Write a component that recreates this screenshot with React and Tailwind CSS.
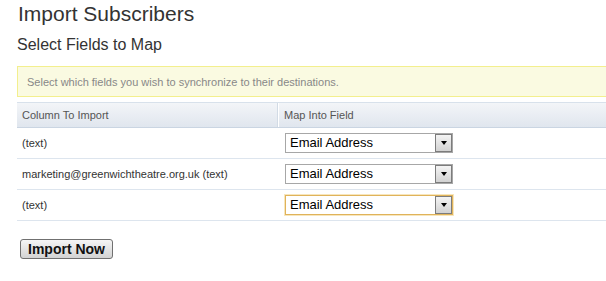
import { useState } from 'react';

const rows = [
    { column: '(text)', focused: false },
    { column: 'marketing@greenwichtheatre.org.uk (text)', focused: false },
    { column: '(text)', focused: true },
];

function FieldSelect({ focused }) {
    const [value, setValue] = useState('email');
    return (
        <div
            className={
                'relative w-[168px] h-[20px] bg-white border ' +
                (focused
                    ? 'border-[#e0b35a] shadow-[0_0_0_1px_#f7e6bd]'
                    : 'border-[#a7a7a7]')
            }
        >
            <select
                value={value}
                onChange={(e) => setValue(e.target.value)}
                className="appearance-none w-full h-full bg-transparent pl-[4px] pr-[20px] text-[13px] leading-[18px] text-black outline-none"
            >
                <option value="email">Email Address</option>
                <option value="first">First Name</option>
                <option value="last">Last Name</option>
            </select>
            {/* arrow button */}
            <span className="pointer-events-none absolute right-0 top-0 w-[17px] h-[18px] border border-[#7c7c7c] bg-gradient-to-b from-[#f4f4f4] to-[#d2d2d2] flex items-center justify-center">
                <span className="w-0 h-0 border-l-[3.5px] border-r-[3.5px] border-t-[4px] border-l-transparent border-r-transparent border-t-black" />
            </span>
        </div>
    );
}

export default function App() {
    return (
        <div className="w-[606px] h-[281px] overflow-hidden bg-white font-['Liberation_Sans',Arial,sans-serif]">
            <div className="w-[640px] pl-[17px]">
                <h1 className="mt-[2px] pl-[1px] text-[21px] leading-[24px] text-[#333]">Import Subscribers</h1>
                <h2 className="mt-[9px] text-[16px] leading-[20px] text-[#333]">Select Fields to Map</h2>

                {/* info box */}
                <div className="mt-[11px] h-[31px] border border-[#f3ef8e] bg-[#fafae1] flex items-center pl-[9px] pt-[2px]">
                    <p className="text-[11px] text-[#888]">Select which fields you wish to synchronize to their destinations.</p>
                </div>

                {/* mapping table */}
                <div className="mt-[5px]">
                    <div className="flex h-[26px] border-t border-b border-t-[#d8e1eb] border-b-[#cad5e2] bg-gradient-to-b from-[#f3f5f8] to-[#e0e6ee] text-[11px] text-[#555]">
                        <div className="w-[261px] flex items-center pl-[5px] border-r border-r-[#d2dbe5]">Column To Import</div>
                        <div className="flex-1 flex items-center pl-[5px] border-l border-l-white">Map Into Field</div>
                    </div>
                    {rows.map((row, i) => (
                        <div key={i} className="flex h-[31px] border-b border-b-[#dde5ee] text-[11px] text-[#333]">
                            <div className="w-[261px] flex items-center pl-[5px]">{row.column}</div>
                            <div className="flex-1 flex items-center pl-[7px]">
                                <FieldSelect focused={row.focused} />
                            </div>
                        </div>
                    ))}
                </div>

                <button
                    type="button"
                    className="mt-[18px] ml-[3px] w-[93px] h-[20px] rounded-[3px] border border-[#707070] bg-gradient-to-b from-[#f5f5f5] to-[#d3d3d3] text-[14px] font-bold leading-[18px] text-[#111]"
                >
                    Import Now
                </button>
            </div>
        </div>
    );
}
